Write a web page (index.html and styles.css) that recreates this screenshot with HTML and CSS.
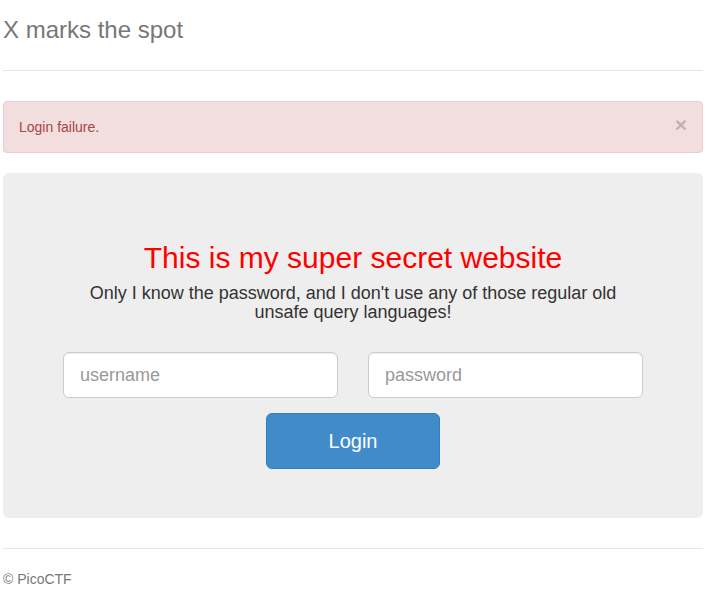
FILE: index.html
```html
<!DOCTYPE html>
<html lang="en">
<head>
<meta charset="utf-8">
<title>X marks the spot</title>
<link rel="stylesheet" href="styles.css">
</head>
<body>
<div class="container">
  <div class="header">
    <h3 class="brand">X marks the spot</h3>
  </div>

  <div class="alert">
    <span>Login failure.</span>
    <button type="button" class="close" aria-label="Close">&times;</button>
  </div>

  <div class="jumbotron">
    <h1 class="title">This is my super secret website</h1>
    <p class="lead">Only I know the password, and I don't use any of those regular old unsafe query languages!</p>
    <form class="login-form">
      <div class="fields">
        <input class="input" type="text" placeholder="username">
        <input class="input" type="password" placeholder="password">
      </div>
      <button type="button" class="btn">Login</button>
    </form>
  </div>

  <div class="footer">
    <p>&copy; PicoCTF</p>
  </div>
</div>
</body>
</html>
```

FILE: styles.css
```css
* { box-sizing: border-box; }

html, body {
  margin: 0;
  padding: 0;
  background: #fff;
}

body {
  font-family: "Liberation Sans", Arial, Helvetica, sans-serif;
  font-size: 14px;
  line-height: 20px;
  color: #333;
}

.container {
  padding: 10px 3px 0 3px;
}

.header {
  padding-bottom: 20px;
  border-bottom: 1px solid #e5e5e5;
}

.brand {
  margin: 0;
  font-size: 24px;
  font-weight: normal;
  line-height: 40px;
  color: #777;
}

.alert {
  margin-top: 30px;
  margin-bottom: 20px;
  padding: 15px;
  border: 1px solid #ebccd1;
  border-radius: 4px;
  background: #f2dede;
  color: #a94442;
  display: flex;
  justify-content: space-between;
  align-items: center;
  height: 52px;
  line-height: 20px;
}

.close {
  border: 0;
  background: transparent;
  padding: 0;
  margin: 0;
  height: 20px;
  font-family: "Liberation Sans", Arial, sans-serif;
  font-size: 21px;
  font-weight: bold;
  line-height: 20px;
  color: #000;
  opacity: 0.2;
  text-shadow: 0 1px 0 #fff;
  cursor: pointer;
  position: relative;
  top: -2px;
  right: 0;
}

.jumbotron {
  background: #eee;
  border-radius: 6px;
  padding: 48px 60px 49px 60px;
  text-align: center;
}

.title {
  margin: 20px 0 10px 0;
  font-size: 30px;
  font-weight: normal;
  line-height: 33px;
  color: #f00;
}

.lead {
  margin: 0 0 30px 0;
  font-size: 18px;
  line-height: 19px;
  color: #333;
}

.fields {
  display: grid;
  grid-template-columns: 1fr 1fr;
  column-gap: 30px;
}

.input {
  display: block;
  width: 100%;
  height: 46px;
  padding: 10px 16px;
  font-family: "Liberation Sans", Arial, sans-serif;
  font-size: 18px;
  line-height: 1.33;
  color: #555;
  background: #fff;
  border: 1px solid #ccc;
  border-radius: 6px;
  box-shadow: inset 0 1px 1px rgba(0,0,0,0.075);
}

.input::placeholder {
  color: #999;
}

.btn {
  display: block;
  width: 174px;
  height: 56px;
  margin: 15px auto 0 auto;
  background: #428bca;
  border: 1px solid #357ebd;
  border-radius: 6px;
  color: #fff;
  font-family: "Liberation Sans", Arial, sans-serif;
  font-size: 20px;
  line-height: 1;
  cursor: pointer;
}

.footer {
  margin-top: 30px;
  padding-top: 20px;
  border-top: 1px solid #e5e5e5;
  color: #777;
}

.footer p {
  margin: 0;
  line-height: 20px;
}
```
